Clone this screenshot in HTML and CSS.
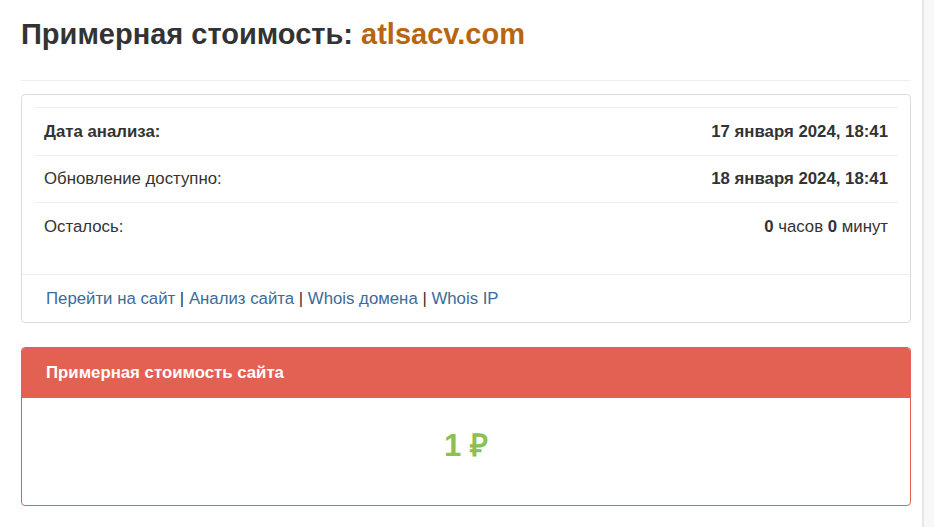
FILE: index.html
```html
<!DOCTYPE html>
<html lang="ru">
<head>
<meta charset="utf-8">
<title>Примерная стоимость: atlsacv.com</title>
<link rel="stylesheet" href="styles.css">
</head>
<body>
<div class="page">
  <main class="main">
    <h1 class="title">Примерная стоимость: <span class="domain">atlsacv.com</span></h1>
    <hr class="sep">
    <section class="panel">
      <div class="panel-body">
        <table class="info">
          <tr><td class="b">Дата анализа:</td><td class="r b">17 января 2024, 18:41</td></tr>
          <tr><td>Обновление доступно:</td><td class="r b">18 января 2024, 18:41</td></tr>
          <tr><td>Осталось:</td><td class="r"><b>0</b> часов <b>0</b> минут</td></tr>
        </table>
      </div>
      <div class="panel-footer">
        <a href="#">Перейти на сайт</a> | <a href="#">Анализ сайта</a> | <a href="#">Whois домена</a> | <a href="#">Whois IP</a>
      </div>
    </section>
    <section class="panel panel-red">
      <div class="panel-heading">Примерная стоимость сайта</div>
      <div class="price-body"><span class="price">1 ₽</span></div>
    </section>
  </main>
  <aside class="side"></aside>
</div>
</body>
</html>
```
FILE: styles.css
```css
html, body { margin: 0; padding: 0; background: #fff; }
body { font-family: "Liberation Sans", Arial, sans-serif; color: #333; font-size: 16.8px; }
.page { display: flex; min-height: 527px; }
.main { width: 890px; padding: 0 11px 0 21px; flex: none; }
.side { flex: 1; border-left: 2px solid #e6e6e6; background: #f8f8f8; }
.title { font-size: 29px; font-weight: bold; margin: 18px 0 0; line-height: 33px; color: #333; }
.domain { color: #b8650f; }
.sep { border: 0; border-top: 1px solid #eee; margin: 29px 0 13px; }
.panel { border: 1px solid #ddd; border-radius: 4px; background: #fff; margin-bottom: 24px; }
.panel-body { padding: 12px 12px 24px; }
.info { width: 100%; border-collapse: collapse; }
.info td { border-top: 1px solid #eee; padding: 0 10px; height: 47px; line-height: 20px; }
.info tr:nth-child(2) td { height: 46px; }
.info .r { text-align: right; }
.info .b { font-weight: bold; }
.panel-footer { border-top: 1px solid #eee; padding: 14px 24px 13px; line-height: 20px; color: #333; }
.panel-footer a { color: #3d6a99; text-decoration: none; }
.panel-red { border-color: #e06152; }
.panel-heading { background: #e36152; color: #fff; font-weight: bold; padding: 15px 24px 15px; line-height: 20px; border-radius: 3px 3px 0 0; }
.price-body { box-sizing: border-box; height: 107px; padding-bottom: 16px; display: flex; align-items: center; justify-content: center; }
.price { color: #8cc152; font-weight: bold; font-size: 31px; }
```
